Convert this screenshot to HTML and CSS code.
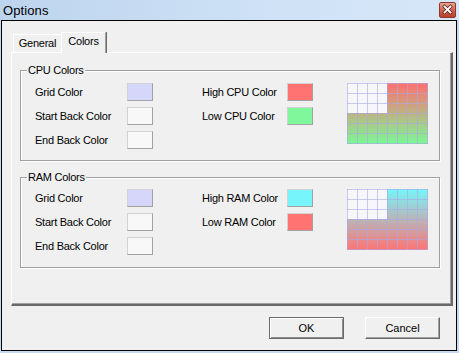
FILE: index.html
```html
<!DOCTYPE html>
<html lang="en">
<head>
    <meta charset="UTF-8">
    <title>Options</title>
    <link rel="stylesheet" href="styles.css">
</head>
<body>
    <div class="window">
        <div class="titlebar">
            <span class="title">Options</span>
            <span class="close">
                <svg width="15" height="14" viewBox="0 0 15 14">
                    <path d="M4.5 3.5 L10.5 9.5 M10.5 3.5 L4.5 9.5" stroke="#5a1a12" stroke-width="3.2" stroke-linecap="square"/>
                    <path d="M4.5 3.5 L10.5 9.5 M10.5 3.5 L4.5 9.5" stroke="#fff" stroke-width="1.8" stroke-linecap="square"/>
                </svg>
            </span>
        </div>

        <div class="client">
            <div class="tabs">
                <div class="tab general">General</div>
                <div class="tab active">Colors</div>
            </div>

            <div class="panel">
                <div class="group">
                    <div class="group-title">CPU Colors</div>
                    <div class="group-body">
                        <div class="col">
                            <div class="row"><span class="label">Grid Color</span><span class="swatch grid"></span></div>
                            <div class="row"><span class="label">Start Back Color</span><span class="swatch back"></span></div>
                            <div class="row"><span class="label">End Back Color</span><span class="swatch back"></span></div>
                        </div>
                        <div class="col col-right">
                            <div class="row"><span class="label">High CPU Color</span><span class="swatch red"></span></div>
                            <div class="row"><span class="label">Low CPU Color</span><span class="swatch green"></span></div>
                        </div>
                        <svg class="preview" width="81" height="61" viewBox="0 0 81 61">
                            <defs>
                                <linearGradient id="cpuFill" x1="0" y1="0" x2="0" y2="1">
                                    <stop offset="0" stop-color="#ff6f6f"/>
                                    <stop offset="1" stop-color="#7cf896"/>
                                </linearGradient>
                            </defs>
                            <rect width="81" height="61" fill="url(#cpuFill)"/>
                            <rect width="40" height="30" fill="#f7f7fb"/>
                            <path class="gridlines" d="M0.5 0V61M10.5 0V61M20.5 0V61M30.5 0V61M40.5 0V61M50.5 0V61M60.5 0V61M70.5 0V61M80.5 0V61M0 0.5H81M0 10.5H81M0 20.5H81M0 30.5H81M0 40.5H81M0 50.5H81M0 60.5H81"/>
                        </svg>
                    </div>
                </div>

                <div class="group ram">
                    <div class="group-title">RAM Colors</div>
                    <div class="group-body">
                        <div class="col">
                            <div class="row"><span class="label">Grid Color</span><span class="swatch grid"></span></div>
                            <div class="row"><span class="label">Start Back Color</span><span class="swatch back"></span></div>
                            <div class="row"><span class="label">End Back Color</span><span class="swatch back"></span></div>
                        </div>
                        <div class="col col-right">
                            <div class="row"><span class="label">High RAM Color</span><span class="swatch cyan"></span></div>
                            <div class="row"><span class="label">Low RAM Color</span><span class="swatch red"></span></div>
                        </div>
                        <svg class="preview" width="81" height="61" viewBox="0 0 81 61">
                            <defs>
                                <linearGradient id="ramFill" x1="0" y1="0" x2="0" y2="1">
                                    <stop offset="0" stop-color="#74f6fa"/>
                                    <stop offset="1" stop-color="#ff7474"/>
                                </linearGradient>
                            </defs>
                            <rect width="81" height="61" fill="url(#ramFill)"/>
                            <rect width="40" height="30" fill="#f7f7fb"/>
                            <path class="gridlines" d="M0.5 0V61M10.5 0V61M20.5 0V61M30.5 0V61M40.5 0V61M50.5 0V61M60.5 0V61M70.5 0V61M80.5 0V61M0 0.5H81M0 10.5H81M0 20.5H81M0 30.5H81M0 40.5H81M0 50.5H81M0 60.5H81"/>
                        </svg>
                    </div>
                </div>
            </div>

            <div class="buttons">
                <button class="btn default">OK</button>
                <button class="btn">Cancel</button>
            </div>
        </div>
    </div>
</body>
</html>
```

FILE: styles.css
```css
body {
    margin: 0;
    background-color: #c6d9f0;
    font-family: "Liberation Sans", Arial, sans-serif;
    font-size: 11px;
    color: #000;
}
.window {
    width: 459px;
    height: 353px;
    display: flex;
    flex-direction: column;
}
.titlebar {
    height: 20px;
    flex: none;
    display: flex;
    align-items: center;
    justify-content: space-between;
    padding: 0 3px 0 3px;
    background: linear-gradient(to right, #bdd4ee, #cfe2f6 60%, #d6e7f8);
}
.title {
    font-size: 13px;
    letter-spacing: 0.1px;
}
.close {
    width: 15px;
    height: 14px;
    border: 1px solid #8a3b2e;
    border-radius: 2px;
    background: linear-gradient(#e8a493, #cf6650 50%, #bb3f2b);
    display: flex;
}
.client {
    flex: 1;
    margin: 0 2px 2px 1px;
    border: 1px solid #000;
    background-color: #f0f0f0;
    padding: 11px 3px 0 9px;
    display: flex;
    flex-direction: column;
}
.tabs {
    height: 20px;
    display: flex;
    align-items: flex-start;
    padding-left: 2px;
}
.tab {
    box-sizing: border-box;
    border: 1px solid;
    border-color: #fff #a0a0a0 transparent #fff;
    border-bottom: none;
    text-align: center;
    letter-spacing: -0.25px;
    background-color: #f0f0f0;
}
.tab.general {
    width: 48px;
    height: 18px;
    margin-top: 2px;
    line-height: 17px;
    border-right: none;
}
.tab.active {
    position: relative;
    z-index: 1;
    width: 45px;
    height: 21px;
    line-height: 17px;
    box-shadow: 1px 0 0 #696969;
}
.panel {
    box-sizing: border-box;
    width: 442px;
    height: 254px;
    border-style: solid;
    border-width: 1px 2px 2px 1px;
    border-color: #fff #696969 #696969 #fff;
    box-shadow: inset -1px -1px 0 #a0a0a0;
    padding: 17px 0 0 8px;
}
.group {
    position: relative;
    box-sizing: border-box;
    width: 420px;
    height: 91px;
    border: 1px solid #a0a0a0;
    box-shadow: inset 1px 1px 0 #fff, 1px 1px 0 #fff;
    margin-bottom: 16px;
}
.group-title {
    position: absolute;
    top: -7px;
    left: 6px;
    padding: 0 1px;
    background-color: #f0f0f0;
    letter-spacing: -0.25px;
}
.group-body {
    display: flex;
    padding: 12px 0 0 14px;
}
.ram .group-body {
    padding-top: 11px;
}
.col {
    display: flex;
    flex-direction: column;
    gap: 6px;
}
.col-right {
    margin-left: 49px;
}
.row {
    display: flex;
    height: 18px;
    align-items: center;
}
.label {
    width: 92px;
    letter-spacing: -0.25px;
}
.col-right .label {
    width: 85px;
}
.swatch {
    box-sizing: border-box;
    width: 26px;
    height: 18px;
    border: 1px solid;
    border-color: #d2d2d2 #a2a2a2 #a2a2a2 #d2d2d2;
}
.swatch.grid { background-color: #d6d6fa; }
.swatch.back { background-color: #f8f8f8; }
.swatch.red { background-color: #ff7373; }
.swatch.green { background-color: #7ff79a; }
.swatch.cyan { background-color: #76f5fa; }
.preview {
    margin-left: 34px;
}
.gridlines {
    stroke: #a9a9e4;
    stroke-width: 1;
    fill: none;
    opacity: 0.6;
}
.buttons {
    display: flex;
    justify-content: flex-end;
    gap: 21px;
    margin-top: 11px;
    padding-right: 13px;
}
.btn {
    box-sizing: border-box;
    width: 75px;
    height: 22px;
    font-family: "Liberation Sans", Arial, sans-serif;
    font-size: 11px;
    background-color: #f0f0f0;
    border: 1px solid;
    border-color: #fff #696969 #696969 #fff;
    box-shadow: inset -1px -1px 0 #a0a0a0;
    padding: 0;
}
.btn.default {
    border: 1px solid #6a6a6a;
    box-shadow: inset 1px 1px 0 #fff, inset -1px -1px 0 #8a8a8a;
}
```
